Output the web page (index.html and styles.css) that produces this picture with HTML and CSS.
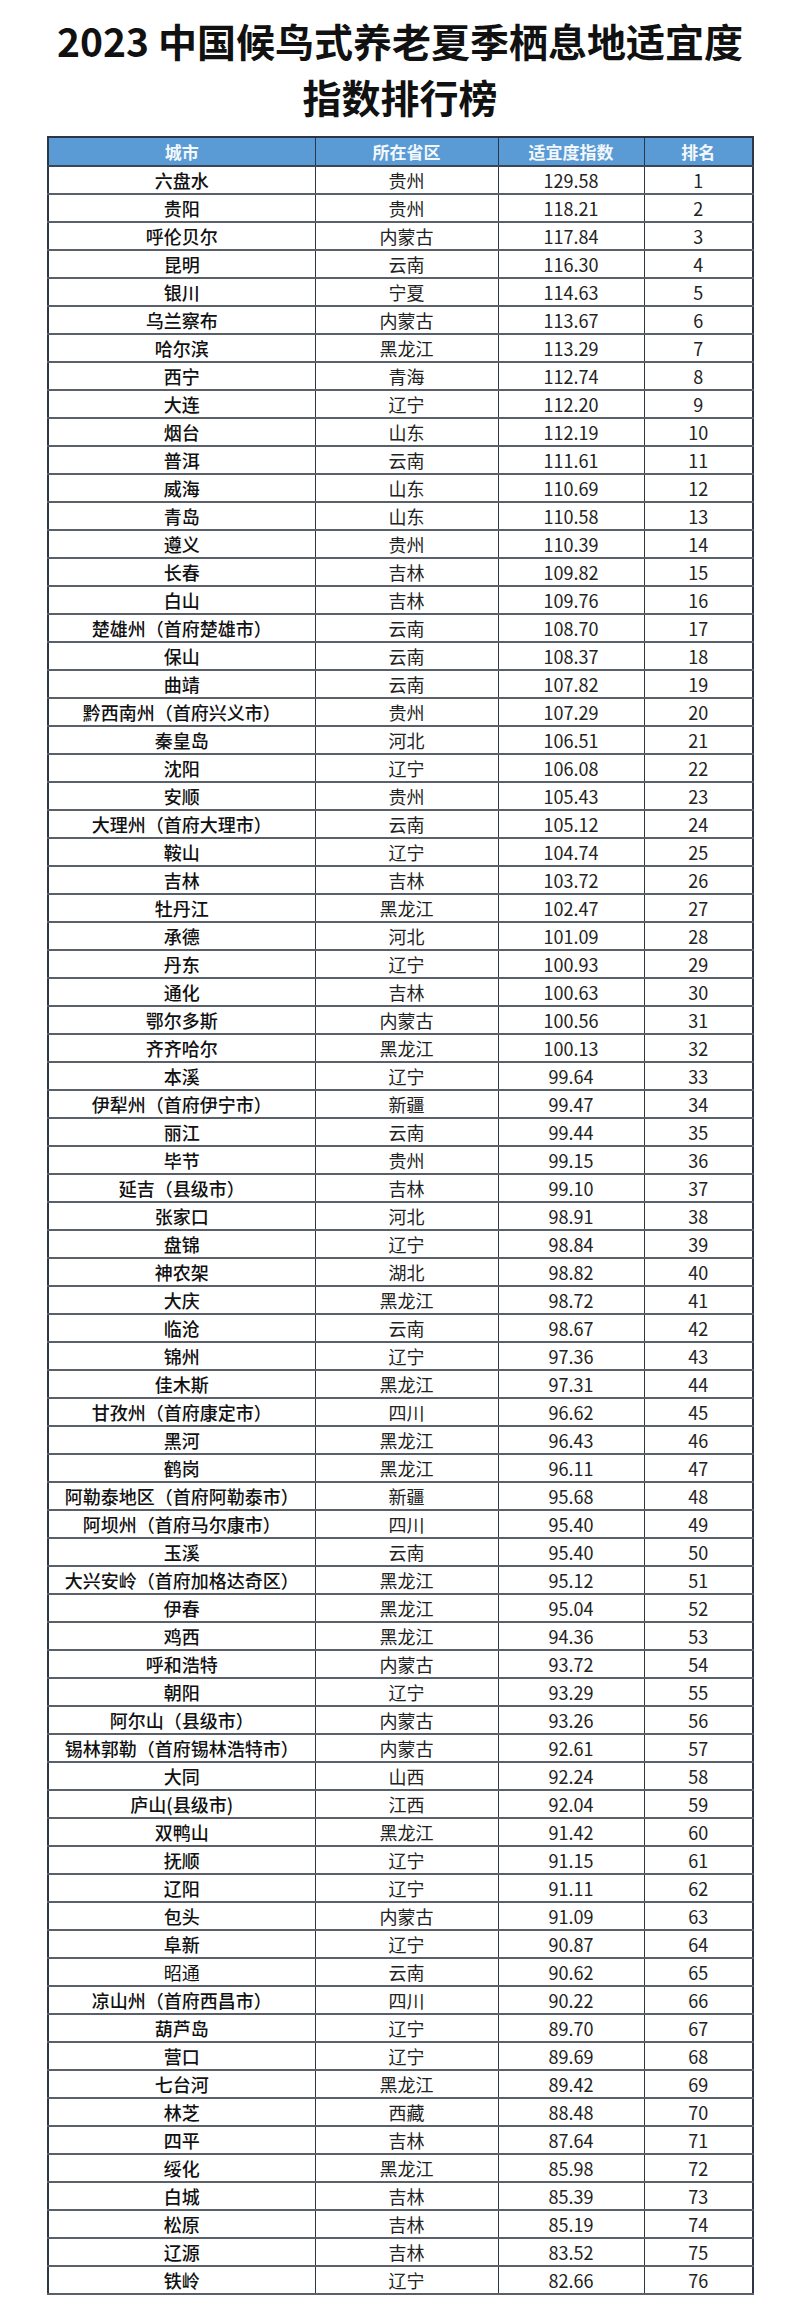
FILE: index.html
```html
<!DOCTYPE html>
<html lang="zh-CN">
<head>
<meta charset="utf-8">
<title>2023 中国候鸟式养老夏季栖息地适宜度指数排行榜</title>
<link rel="stylesheet" href="styles.css">
</head>
<body>
<div class="page">
  <h1 class="title">2023 中国候鸟式养老夏季栖息地适宜度<br>指数排行榜</h1>
  <table class="rank">
    <colgroup>
      <col class="c-city"><col class="c-prov"><col class="c-idx"><col class="c-rank">
    </colgroup>
    <thead>
      <tr><th>城市</th><th>所在省区</th><th>适宜度指数</th><th>排名</th></tr>
    </thead>
    <tbody>
      <tr><td class="city">六盘水</td><td>贵州</td><td>129.58</td><td>1</td></tr>
      <tr><td class="city">贵阳</td><td>贵州</td><td>118.21</td><td>2</td></tr>
      <tr><td class="city">呼伦贝尔</td><td>内蒙古</td><td>117.84</td><td>3</td></tr>
      <tr><td class="city">昆明</td><td>云南</td><td>116.30</td><td>4</td></tr>
      <tr><td class="city">银川</td><td>宁夏</td><td>114.63</td><td>5</td></tr>
      <tr><td class="city">乌兰察布</td><td>内蒙古</td><td>113.67</td><td>6</td></tr>
      <tr><td class="city">哈尔滨</td><td>黑龙江</td><td>113.29</td><td>7</td></tr>
      <tr><td class="city">西宁</td><td>青海</td><td>112.74</td><td>8</td></tr>
      <tr><td class="city">大连</td><td>辽宁</td><td>112.20</td><td>9</td></tr>
      <tr><td class="city">烟台</td><td>山东</td><td>112.19</td><td>10</td></tr>
      <tr><td class="city">普洱</td><td>云南</td><td>111.61</td><td>11</td></tr>
      <tr><td class="city">威海</td><td>山东</td><td>110.69</td><td>12</td></tr>
      <tr><td class="city">青岛</td><td>山东</td><td>110.58</td><td>13</td></tr>
      <tr><td class="city">遵义</td><td>贵州</td><td>110.39</td><td>14</td></tr>
      <tr><td class="city">长春</td><td>吉林</td><td>109.82</td><td>15</td></tr>
      <tr><td class="city">白山</td><td>吉林</td><td>109.76</td><td>16</td></tr>
      <tr><td class="city">楚雄州（首府楚雄市）</td><td>云南</td><td>108.70</td><td>17</td></tr>
      <tr><td class="city">保山</td><td>云南</td><td>108.37</td><td>18</td></tr>
      <tr><td class="city">曲靖</td><td>云南</td><td>107.82</td><td>19</td></tr>
      <tr><td class="city">黔西南州（首府兴义市）</td><td>贵州</td><td>107.29</td><td>20</td></tr>
      <tr><td class="city">秦皇岛</td><td>河北</td><td>106.51</td><td>21</td></tr>
      <tr><td class="city">沈阳</td><td>辽宁</td><td>106.08</td><td>22</td></tr>
      <tr><td class="city">安顺</td><td>贵州</td><td>105.43</td><td>23</td></tr>
      <tr><td class="city">大理州（首府大理市）</td><td>云南</td><td>105.12</td><td>24</td></tr>
      <tr><td class="city">鞍山</td><td>辽宁</td><td>104.74</td><td>25</td></tr>
      <tr><td class="city">吉林</td><td>吉林</td><td>103.72</td><td>26</td></tr>
      <tr><td class="city">牡丹江</td><td>黑龙江</td><td>102.47</td><td>27</td></tr>
      <tr><td class="city">承德</td><td>河北</td><td>101.09</td><td>28</td></tr>
      <tr><td class="city">丹东</td><td>辽宁</td><td>100.93</td><td>29</td></tr>
      <tr><td class="city">通化</td><td>吉林</td><td>100.63</td><td>30</td></tr>
      <tr><td class="city">鄂尔多斯</td><td>内蒙古</td><td>100.56</td><td>31</td></tr>
      <tr><td class="city">齐齐哈尔</td><td>黑龙江</td><td>100.13</td><td>32</td></tr>
      <tr><td class="city">本溪</td><td>辽宁</td><td>99.64</td><td>33</td></tr>
      <tr><td class="city">伊犁州（首府伊宁市）</td><td>新疆</td><td>99.47</td><td>34</td></tr>
      <tr><td class="city">丽江</td><td>云南</td><td>99.44</td><td>35</td></tr>
      <tr><td class="city">毕节</td><td>贵州</td><td>99.15</td><td>36</td></tr>
      <tr><td class="city">延吉（县级市）</td><td>吉林</td><td>99.10</td><td>37</td></tr>
      <tr><td class="city">张家口</td><td>河北</td><td>98.91</td><td>38</td></tr>
      <tr><td class="city">盘锦</td><td>辽宁</td><td>98.84</td><td>39</td></tr>
      <tr><td class="city">神农架</td><td>湖北</td><td>98.82</td><td>40</td></tr>
      <tr><td class="city">大庆</td><td>黑龙江</td><td>98.72</td><td>41</td></tr>
      <tr><td class="city">临沧</td><td>云南</td><td>98.67</td><td>42</td></tr>
      <tr><td class="city">锦州</td><td>辽宁</td><td>97.36</td><td>43</td></tr>
      <tr><td class="city">佳木斯</td><td>黑龙江</td><td>97.31</td><td>44</td></tr>
      <tr><td class="city">甘孜州（首府康定市）</td><td>四川</td><td>96.62</td><td>45</td></tr>
      <tr><td class="city">黑河</td><td>黑龙江</td><td>96.43</td><td>46</td></tr>
      <tr><td class="city">鹤岗</td><td>黑龙江</td><td>96.11</td><td>47</td></tr>
      <tr><td class="city">阿勒泰地区（首府阿勒泰市）</td><td>新疆</td><td>95.68</td><td>48</td></tr>
      <tr><td class="city">阿坝州（首府马尔康市）</td><td>四川</td><td>95.40</td><td>49</td></tr>
      <tr><td class="city">玉溪</td><td>云南</td><td>95.40</td><td>50</td></tr>
      <tr><td class="city">大兴安岭（首府加格达奇区）</td><td>黑龙江</td><td>95.12</td><td>51</td></tr>
      <tr><td class="city">伊春</td><td>黑龙江</td><td>95.04</td><td>52</td></tr>
      <tr><td class="city">鸡西</td><td>黑龙江</td><td>94.36</td><td>53</td></tr>
      <tr><td class="city">呼和浩特</td><td>内蒙古</td><td>93.72</td><td>54</td></tr>
      <tr><td class="city">朝阳</td><td>辽宁</td><td>93.29</td><td>55</td></tr>
      <tr><td class="city">阿尔山（县级市）</td><td>内蒙古</td><td>93.26</td><td>56</td></tr>
      <tr><td class="city">锡林郭勒（首府锡林浩特市）</td><td>内蒙古</td><td>92.61</td><td>57</td></tr>
      <tr><td class="city">大同</td><td>山西</td><td>92.24</td><td>58</td></tr>
      <tr><td class="city">庐山(县级市)</td><td>江西</td><td>92.04</td><td>59</td></tr>
      <tr><td class="city">双鸭山</td><td>黑龙江</td><td>91.42</td><td>60</td></tr>
      <tr><td class="city">抚顺</td><td>辽宁</td><td>91.15</td><td>61</td></tr>
      <tr><td class="city">辽阳</td><td>辽宁</td><td>91.11</td><td>62</td></tr>
      <tr><td class="city">包头</td><td>内蒙古</td><td>91.09</td><td>63</td></tr>
      <tr><td class="city">阜新</td><td>辽宁</td><td>90.87</td><td>64</td></tr>
      <tr><td class="city light">昭通</td><td>云南</td><td>90.62</td><td>65</td></tr>
      <tr><td class="city">凉山州（首府西昌市）</td><td>四川</td><td>90.22</td><td>66</td></tr>
      <tr><td class="city">葫芦岛</td><td>辽宁</td><td>89.70</td><td>67</td></tr>
      <tr><td class="city">营口</td><td>辽宁</td><td>89.69</td><td>68</td></tr>
      <tr><td class="city">七台河</td><td>黑龙江</td><td>89.42</td><td>69</td></tr>
      <tr><td class="city">林芝</td><td>西藏</td><td>88.48</td><td>70</td></tr>
      <tr><td class="city">四平</td><td>吉林</td><td>87.64</td><td>71</td></tr>
      <tr><td class="city">绥化</td><td>黑龙江</td><td>85.98</td><td>72</td></tr>
      <tr><td class="city">白城</td><td>吉林</td><td>85.39</td><td>73</td></tr>
      <tr><td class="city">松原</td><td>吉林</td><td>85.19</td><td>74</td></tr>
      <tr><td class="city">辽源</td><td>吉林</td><td>83.52</td><td>75</td></tr>
      <tr><td class="city">铁岭</td><td>辽宁</td><td>82.66</td><td>76</td></tr>
    </tbody>
  </table>
</div>
</body>
</html>
```
FILE: styles.css
```css
html, body {
  margin: 0;
  padding: 0;
  background: #ffffff;
}
body {
  font-family: "Noto Sans CJK SC", "Noto Sans", sans-serif;
  color: #1a1a1a;
}
.page {
  width: 800px;
  padding-top: 12px;
}
.title {
  margin: 0;
  font-size: 39px;
  line-height: 56px;
  font-weight: 700;
  text-align: center;
  color: #111111;
  letter-spacing: 0;
}
.rank {
  margin: 12px 0 0 47px;
  width: 705px;
  border-collapse: collapse;
  table-layout: fixed;
  border: 2px solid #2c3645;
}
.c-city { width: 267px; }
.c-prov { width: 183px; }
.c-idx { width: 146px; }
.c-rank { width: 109px; }
.rank th {
  height: 27px;
  padding: 0;
  background: #5b9bd5;
  color: #f2f7fc;
  font-size: 17px;
  font-weight: 700;
  text-align: center;
  border-left: 1px solid #2c3645;
  border-right: 1px solid #2c3645;
  border-bottom: 2px solid #3c4656;
  line-height: 27px;
}
.rank td {
  height: 26px;
  padding: 0;
  text-align: center;
  font-size: 18px;
  line-height: 26px;
  color: #222222;
  font-weight: 400;
  white-space: nowrap;
  border-left: 1px solid #2c3645;
  border-right: 1px solid #2c3645;
  border-bottom: 2px solid #5a6068;
}
.rank td.city {
  font-weight: 500;
  color: #111111;
}
.rank td.city.light {
  font-weight: 400;
}
```
